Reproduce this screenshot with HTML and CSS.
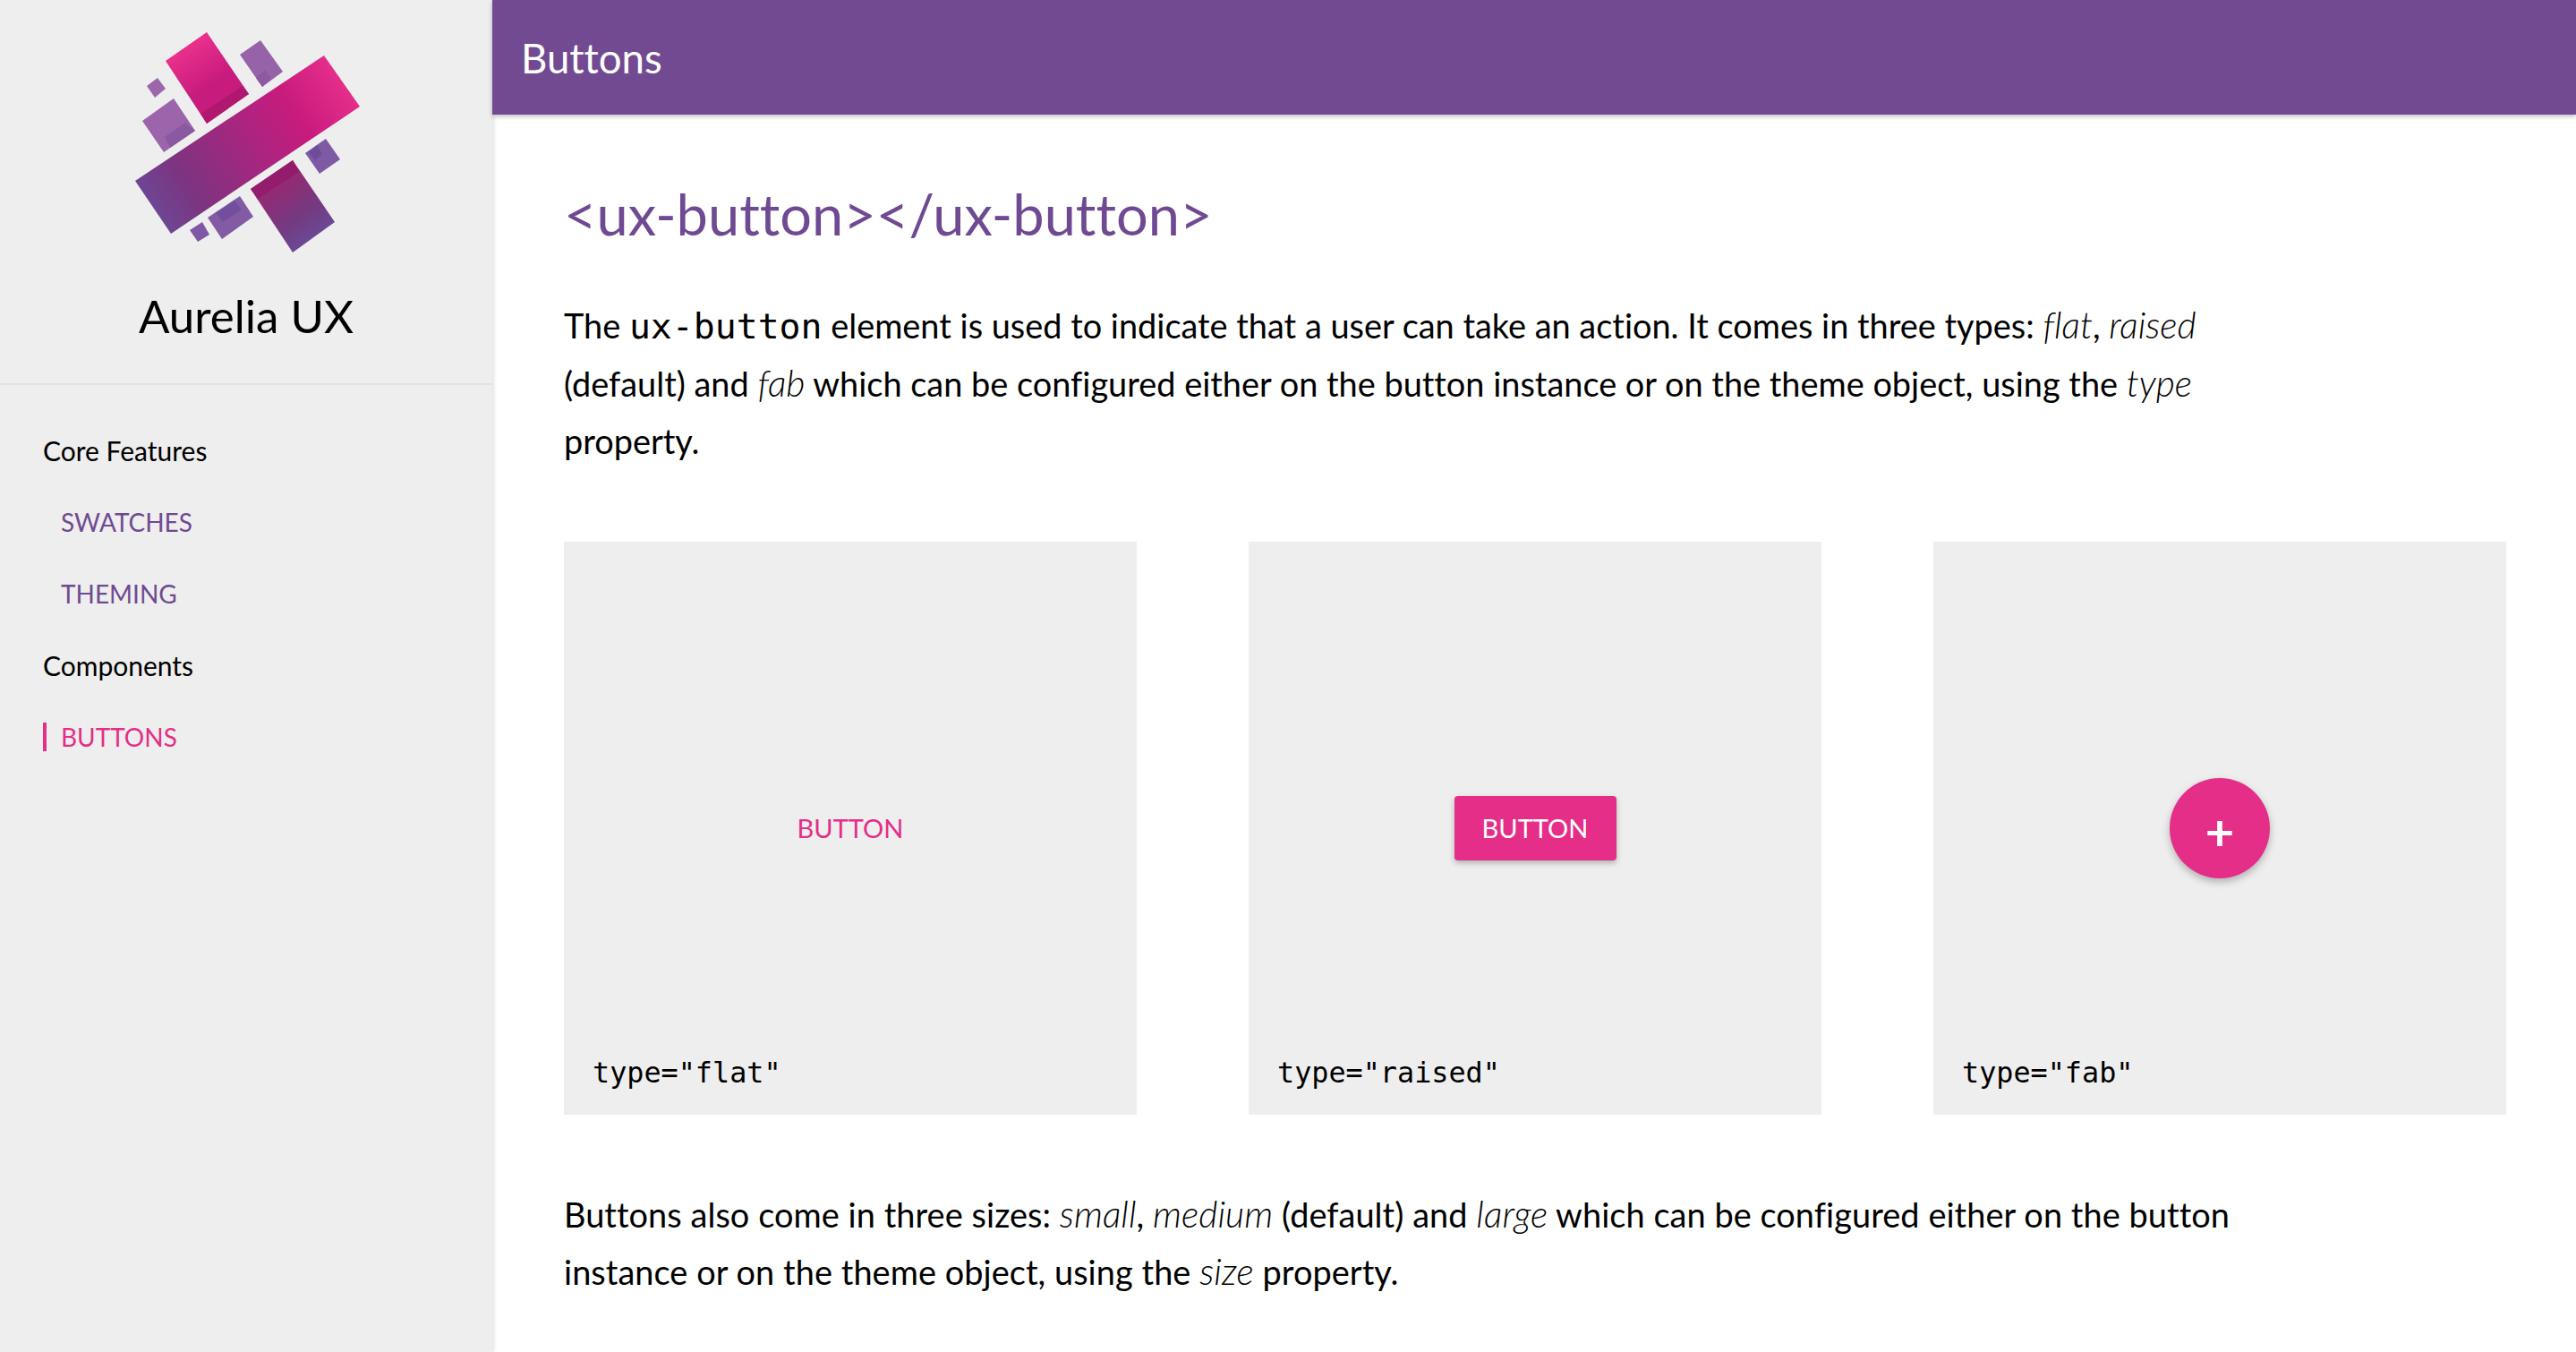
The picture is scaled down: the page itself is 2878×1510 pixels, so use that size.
FILE: index.html
```html
<!DOCTYPE html>
<html lang="en">
<head>
<meta charset="utf-8">
<title>Buttons - Aurelia UX</title>
<link rel="stylesheet" href="styles.css">
</head>
<body>
<div class="app">
  <aside class="sidebar">
    <div class="brand">
      <svg class="logo" viewBox="0 0 550 310" width="550" height="310" aria-hidden="true">
        <defs>
          <linearGradient id="barGrad" gradientUnits="userSpaceOnUse" x1="165" y1="240" x2="395" y2="85">
            <stop offset="0" stop-color="#6a4a98"/>
            <stop offset="0.2" stop-color="#7c3480"/>
            <stop offset="0.72" stop-color="#c81b7e"/>
            <stop offset="1" stop-color="#ec318c"/>
          </linearGradient>
          <linearGradient id="topGrad" gradientUnits="userSpaceOnUse" x1="205" y1="50" x2="255" y2="125">
            <stop offset="0" stop-color="#ec318c"/>
            <stop offset="0.6" stop-color="#c81b7e"/>
          </linearGradient>
          <linearGradient id="botGrad" gradientUnits="userSpaceOnUse" x1="300" y1="195" x2="352" y2="268">
            <stop offset="0" stop-color="#a0246f"/>
            <stop offset="0.65" stop-color="#743a80"/>
            <stop offset="1" stop-color="#6a4a98"/>
          </linearGradient>
        </defs>
        <polygon fill="url(#barGrad)" points="362,62 402,119 191,261 151,202"/>
        <polygon fill="url(#topGrad)" points="231,36 278,105 231,138 185,68"/>
        <polygon fill="#b0186f" points="271,96 278,105 231,138 224,127"/>
        <polygon fill="#9763a8" points="291,45 316,80 293,97 268,61"/>
        <polygon fill="#8d59a0" points="296,78 303,88 293,97 286,87"/>
        <polygon fill="#9c66ab" points="176,87 185,99 173,109 164,96"/>
        <polygon fill="#9c64aa" points="194,110 218,146 183,170 159,135"/>
        <polygon fill="#8b59a1" points="207,137 218,146 190,165 184,153"/>
        <polygon fill="#7d5aa3" points="364,155 380,178 357,194 341,171"/>
        <polygon fill="#6f4c98" points="354,162 360,172 352,179 345,170"/>
        <polygon fill="url(#botGrad)" points="327,179 374,248 327,282 280,211"/>
        <polygon fill="#931c6c" points="327,179 334,192 288,222 280,211"/>
        <polygon fill="#835ba5" points="268,219 283,242 248,267 232,243"/>
        <polygon fill="#734e9c" points="262,224 270,234 249,248 241,238"/>
        <polygon fill="#8057a4" points="226,248 234,262 221,270 212,257"/>
      </svg>
      <div class="brand-name">Aurelia UX</div>
    </div>
    <nav class="nav">
      <div class="nav-row"><span class="nav-heading">Core Features</span></div>
      <div class="nav-row"><a class="nav-link" href="#">Swatches</a></div>
      <div class="nav-row"><a class="nav-link" href="#">Theming</a></div>
      <div class="nav-row"><span class="nav-heading">Components</span></div>
      <div class="nav-row"><a class="nav-link is-active" href="#">Buttons</a></div>
    </nav>
  </aside>
  <div class="page">
    <header class="topbar">Buttons</header>
    <main class="content">
      <h1 class="title">&lt;ux-button&gt;&lt;/ux-button&gt;</h1>
      <p class="copy">The <code class="code">ux-button</code> element is used to indicate that a user can take an action. It comes in three types: <em>flat</em>, <em>raised</em><br>(default) and <em>fab</em> which can be configured either on the button instance or on the theme object, using the <em>type</em><br>property.</p>
      <section class="cards">
        <div class="card">
          <button class="btn btn-flat" type="button">Button</button>
          <code class="card-label">type="flat"</code>
        </div>
        <div class="card">
          <button class="btn btn-raised" type="button">Button</button>
          <code class="card-label">type="raised"</code>
        </div>
        <div class="card">
          <button class="btn-fab" type="button">+</button>
          <code class="card-label">type="fab"</code>
        </div>
      </section>
      <p class="copy copy-after">Buttons also come in three sizes: <em>small</em>, <em>medium</em> (default) and <em>large</em> which can be configured either on the button<br>instance or on the theme object, using the <em>size</em> property.</p>
    </main>
  </div>
</div>
</body>
</html>
```
FILE: styles.css
```css
* { box-sizing: border-box; }
html, body { margin: 0; padding: 0; height: 100%; overflow: hidden; }
body {
  font-family: "Lato", "Noto Sans", sans-serif;
  font-variant-ligatures: none;
  color: #000;
  background: #fff;
}
.app {
  display: grid;
  grid-template-columns: 550px 1fr;
  height: 1510px;
}
.sidebar {
  background: #eee;
  box-shadow: 2px 0 4px rgba(0, 0, 0, 0.12);
  position: relative;
  z-index: 1;
}
.brand {
  height: 430px;
  border-bottom: 2px solid #e3e3e3;
  display: flex;
  flex-direction: column;
  align-items: center;
}
.logo { display: block; flex: none; }
.brand-name {
  font-size: 51px;
  line-height: 60px;
  margin-top: 13px;
}
.nav { padding-top: 33px; }
.nav-row {
  height: 80px;
  display: flex;
  align-items: center;
  padding-left: 48px;
  font-size: 30px;
}
.nav-link {
  display: block;
  line-height: 32px;
  border-left: 4px solid transparent;
  padding-left: 16px;
  font-size: 28px;
  color: #6f4a92;
  text-transform: uppercase;
  text-decoration: none;
}
.nav-link.is-active {
  color: #e42e88;
  border-left-color: #e42e88;
}
.page { min-width: 0; display: flex; flex-direction: column; }
.topbar {
  height: 128px;
  flex: none;
  background: #724a92;
  color: #fff;
  display: flex;
  align-items: center;
  padding-left: 32px;
  font-size: 45.5px;
  box-shadow: 0 2px 5px rgba(0, 0, 0, 0.26);
  position: relative;
  z-index: 2;
}
.content { padding: 68px 78px 0 80px; }
.title {
  margin: 0;
  font-size: 63.1px;
  line-height: 86px;
  font-weight: 400;
  color: #6f4a92;
}
.copy {
  margin: 50px 0 0;
  font-size: 37.9px;
  line-height: 64.5px;
}
.copy em { font-weight: 300; font-style: italic; font-size: 1.08em; line-height: 1; }
.code {
  font-family: "DejaVu Sans Mono", "Liberation Mono", monospace;
  font-size: 39.8px;
  line-height: 1;
}
.cards {
  margin-top: 79px;
  display: grid;
  grid-template-columns: repeat(3, 640px);
  justify-content: space-between;
}
.card {
  height: 640px;
  background: #eee;
  display: grid;
  grid-template-rows: 1fr auto 1fr;
  justify-items: center;
  align-items: center;
}
.card > :first-child { grid-row: 2; }
.card-label {
  grid-row: 3;
  justify-self: start;
  align-self: end;
  padding: 0 0 26px 32px;
  font-family: "DejaVu Sans Mono", "Liberation Mono", monospace;
  font-size: 31.8px;
  line-height: 42px;
}
.btn {
  display: block;
  height: 72px;
  width: 181px;
  padding: 0;
  border: 0;
  border-radius: 4px;
  font-family: inherit;
  font-size: 29px;
  text-transform: uppercase;
}
.btn-flat { background: transparent; color: #e42e88; }
.btn-raised {
  background: #e42e88;
  color: #fff;
  box-shadow: 0 3px 6px rgba(0, 0, 0, 0.26);
}
.btn-fab {
  display: block;
  width: 112px;
  height: 112px;
  padding: 8px 0 0;
  border: 0;
  border-radius: 50%;
  background: #e42e88;
  color: #fff;
  font-family: inherit;
  font-size: 56px;
  font-weight: 700;
  line-height: 56px;
  box-shadow: 0 4px 8px rgba(0, 0, 0, 0.26);
}
.copy-after { margin-top: 80px; letter-spacing: 0.06px; }
```
